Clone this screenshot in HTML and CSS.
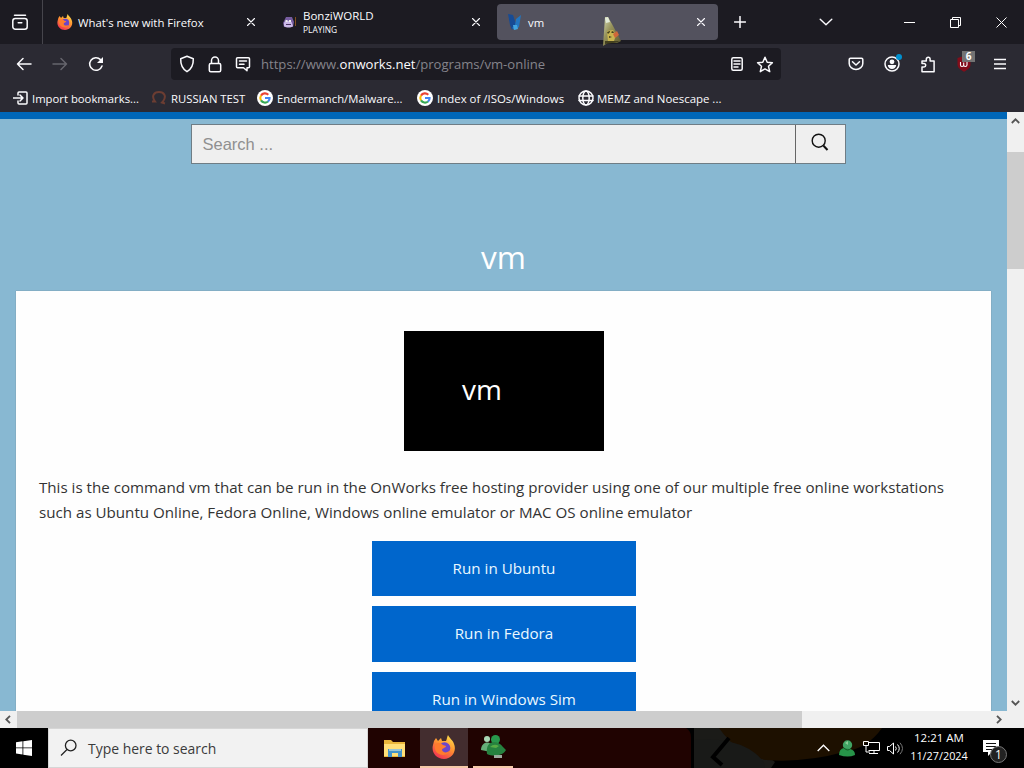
FILE: index.html
```html
<!DOCTYPE html>
<html lang="en">
<head>
<meta charset="utf-8">
<title>vm</title>
<link rel="stylesheet" href="styles.css">
</head>
<body>
<svg class="defs" aria-hidden="true">
  <defs>
    <linearGradient id="flame" x1=".8" y1="0" x2=".25" y2="1"><stop offset="0" stop-color="#ffe34d"/><stop offset=".45" stop-color="#ff9330"/><stop offset="1" stop-color="#f02d55"/></linearGradient>
    <linearGradient id="paper" x1="0" y1="0" x2="1" y2="1"><stop offset="0" stop-color="#d4dbb8"/><stop offset=".4" stop-color="#96925a"/><stop offset="1" stop-color="#5d5830"/></linearGradient>
  </defs>
  <symbol id="firefox" viewBox="0 0 24 24">
    <path fill="url(#flame)" d="M2 6l2-3 2 3 3-3 1 3 4 0C15 4 15 2 16 0c1 3 5 5 6 9 3 7-2 15-10 15C4 24-1 17 1 10z"/>
    <circle cx="12.5" cy="13" r="5.8" fill="#6b45c9"/>
    <path fill="#ff7b2d" d="M3 9c4-2 6-1 8 1l3 1c0 2-4 2-4 4 1 3 5 3 7 1 0 5-12 6-14-2z"/>
  </symbol>
  <symbol id="google" viewBox="0 0 16 16">
    <circle cx="8" cy="8" r="8" fill="#fff"/>
    <g fill="none" stroke-width="2.1">
      <path stroke="#ea4335" d="M4 5.6A4.7 4.7 0 0 1 11.3 4.7"/>
      <path stroke="#fbbc05" d="M4 5.5a4.8 4.8 0 0 0 0 5"/>
      <path stroke="#34a853" d="M4 10.4a4.7 4.7 0 0 0 7 1.1"/>
      <path stroke="#4285f4" d="M8 8h4.6a4.6 4.6 0 0 1-1.6 3.6"/>
    </g>
  </symbol>
  <symbol id="close" viewBox="0 0 8 8"><path d="M.5.5l7 7m0-7l-7 7"/></symbol>
</svg>

<div class="screen">
  <header class="tabs">
    <div class="firefox-view">
      <svg class="line" width="18" height="18" viewBox="0 0 18 18"><rect x="1.8" y="5.5" width="14.4" height="10.7" rx="2.5"/><path d="M3.5 2.3h11M7.2 9.8h3.6"/></svg>
    </div>
    <div class="tab">
      <svg class="fav" width="16" height="16"><use href="#firefox"/></svg>
      <span class="label">What's new with Firefox</span>
      <svg class="line x" width="8" height="8"><use href="#close"/></svg>
    </div>
    <div class="tab">
      <svg class="fav" width="16" height="16" viewBox="0 0 16 16"><path fill="#765da0" d="M2 9l3-6 6 0 2 5-1 5H3z"/><path fill="#cbb9e8" d="M3 9c1-3 7-3 8 0l1 3c-2 2-7 2-9 0z"/><path fill="#eee" d="M4.500 6h2v2h-2zM8 6h2v2H8z"/><path fill="#493264" d="M5 10h5v1H5z"/><path stroke="#82501e" d="M14.5 3v9"/></svg>
      <div class="label stacked"><span>BonziWORLD</span><small>PLAYING</small></div>
      <svg class="line x" width="8" height="8"><use href="#close"/></svg>
    </div>
    <div class="tab active">
      <svg class="fav" width="16" height="18" viewBox="0 0 16 18"><path fill="#174b94" d="M1 1l5 1 3 9-4 6-2-5z"/><path fill="#2375bf" d="M9 6l5-4-2 12-4 3-3-2 3-3z"/><path fill="#43a5df" d="M6 12l4 0 1 4-4 1z"/></svg>
      <span class="label">vm</span>
      <svg class="line x" width="8" height="8"><use href="#close"/></svg>
      <svg class="cursor" width="24" height="32" viewBox="0 0 24 32"><path fill="url(#paper)" d="M5 1l3 0 4 7 9 17-4 2-8-1-6 4z"/><path fill="#c9b550" d="M7 15l6-1 3 5-2 6-6 1z"/><path fill="#d0683a" d="M13 18l4-3 2 4-4 3z"/><path fill="#43401f" d="M7 16l3-1 0 1-2 2zM11 16l2-1 1 2-2 0zM9 20l3 1-3 1zM5 25l13 0 1 1-14 2z"/><path fill="#e1ead8" d="M5 2l3-1 2 5-4 1z"/></svg>
    </div>
    <div class="new-tab"><svg class="line" width="12" height="12" viewBox="0 0 12 12"><path d="M6 .5v11M.5 6h11"/></svg></div>
    <div class="window-buttons">
      <svg class="line" width="14" height="8" viewBox="0 0 14 8"><path d="M1.2 1.2L7 6.8l5.8-5.6"/></svg>
      <svg class="thin" width="11" height="11" viewBox="0 0 11 11"><path d="M0 5.5h11"/></svg>
      <svg class="thin" width="11" height="11" viewBox="0 0 11 11"><path d="M.5 2.5h8v8h-8zM2.5 2.5v-2h8v8h-2"/></svg>
      <svg class="thin" width="11" height="11" viewBox="0 0 11 11"><path d="M.5.5l10 10m0-10l-10 10"/></svg>
    </div>
  </header>

  <nav class="toolbar">
    <div class="history">
      <svg class="line" width="16" height="14" viewBox="0 0 16 14"><path d="M7 1.500L1.500 7 7 12.500M1.500 7H15"/></svg>
      <svg class="line dim" width="16" height="14" viewBox="0 0 16 14"><path d="M9 1.500l5.500 5.500L9 12.500M14.500 7H1"/></svg>
      <svg class="line" width="16" height="16" viewBox="0 0 16 16"><path d="M14 10A6.300 6.300 0 1 1 12.500 3.600"/><path fill="#fbfbfe" stroke="none" d="M15 1v6H9z"/></svg>
    </div>
    <div class="url">
      <svg class="line" width="16" height="18" viewBox="0 0 16 18"><path d="M8 1.300l6.300 2.400c.2 5.500-1.500 10-6.300 13C3.200 13.700 1.500 9.200 1.700 3.700z"/></svg>
      <svg class="line" width="14" height="17" viewBox="0 0 14 17"><rect x="1.300" y="7.500" width="11.400" height="8.300" rx="1.500"/><path d="M3.500 7V4.500a3.500 3.500 0 0 1 7 0V7"/></svg>
      <svg class="line" width="16" height="16" viewBox="0 0 16 16"><path d="M2.500 1.700h11q1 0 1 1v8q0 1-1 1H12v3l-3.500-3h-6q-1 0-1-1v-8q0-1 1-1zM4.500 5h7M4.500 8.200H9"/></svg>
      <span class="address">https://www.<b>onworks.net</b>/programs/vm-online</span>
      <svg class="line" width="12" height="14" viewBox="0 0 12 14"><rect x=".8" y=".8" width="10.400" height="12.400" rx="1.500"/><path d="M3 4h6M3 7h6M3 10h4"/></svg>
      <svg class="line" width="18" height="17" viewBox="0 0 18 17"><path d="M9 1.300l2.200 4.900 5.200.5-3.900 3.600 1.200 5.300L9 12.900l-4.700 2.700 1.200-5.300-3.900-3.600 5.200-.5z"/></svg>
    </div>
    <div class="actions">
      <svg class="line" width="16" height="14" viewBox="0 0 16 14"><path d="M2.500 1.200h11q1.300 0 1.300 1.200v4a6.800 6 0 0 1-13.600 0v-4q0-1.200 1.300-1.200zM4.500 4.700L8 8l3.500-3.300"/></svg>
      <div class="badge-box">
        <svg class="line" width="16" height="16" viewBox="0 0 16 16"><circle cx="8" cy="8" r="7"/><circle cx="8" cy="5.800" r="2.400" fill="#fbfbfe" stroke="none"/><path fill="#fbfbfe" stroke="none" d="M3.800 9h8.400c-.3 5.200-8.100 5.200-8.400 0z"/></svg>
        <i class="dot"></i>
      </div>
      <svg class="line" width="16" height="17" viewBox="0 0 16 17"><path d="M2 15.800V11h2a1.600 1.600 0 0 0 0-3.400H2V5h4.300V3.200a1.900 1.900 0 0 1 3.800 0V5h4v10.800z"/></svg>
      <div class="badge-box">
        <svg width="16" height="16" viewBox="0 0 16 16"><path fill="#820d1a" d="M1.500 2l6.500-2 6.500 2v7c0 3-4 5.500-6.500 6.700C5.500 14.500 1.500 12 1.500 9z"/><path fill="none" stroke="#fff" stroke-width="1.100" d="M4.500 6v3q0 1.500 1.500 1.500T7.700 9V6.500M7.700 9q0 1.500 1.600 1.500T11 9V6"/></svg>
        <b class="count">6</b>
      </div>
      <svg class="line menu" width="12" height="12" viewBox="0 0 12 12"><path d="M0 1.500h12M0 6h12M0 10.500h12"/></svg>
    </div>
  </nav>

  <div class="bookmarks">
    <div class="bm b1"><svg class="line" width="15" height="14" viewBox="0 0 15 14"><path d="M5 4V2q0-1 1-1h7q1 0 1 1v10q0 1-1 1H6q-1 0-1-1v-2M0 7h10M7 4l3 3-3 3"/></svg><span>Import bookmarks...</span></div>
    <div class="bm b2"><svg width="16" height="16" viewBox="0 0 16 16" fill="none" stroke="#6c3d32" stroke-width="2"><path d="M1 11.500h3C0 6 3 2 8 2s8 4 4 9.500l-1 1 3 1"/></svg><span>RUSSIAN TEST</span></div>
    <div class="bm b3"><svg width="16" height="16"><use href="#google"/></svg><span>Endermanch/Malware...</span></div>
    <div class="bm b4"><svg width="16" height="16"><use href="#google"/></svg><span>Index of /ISOs/Windows</span></div>
    <div class="bm b5"><svg class="line" width="16" height="16" viewBox="0 0 16 16"><circle cx="8" cy="8" r="7"/><ellipse cx="8" cy="8" rx="3.200" ry="7"/><path d="M1 6h14M1 10.500h14"/></svg><span>MEMZ and Noescape ...</span></div>
  </div>

  <div class="viewport">
    <main class="page">
      <form class="search"><span class="field">Search ...</span><span class="go"><svg width="18" height="19" viewBox="0 0 18 19" fill="none" stroke="#111" stroke-width="1.400"><circle cx="7.700" cy="7.700" r="6.500"/><path stroke-width="2" d="M12.500 12.700l4 4.300"/></svg></span></form>
      <h1>vm</h1>
      <section class="card">
        <div class="thumb"><span>vm</span></div>
        <p><span>This is the command vm that can be run in the OnWorks free hosting provider using one of our multiple free online workstations</span><br><span>such as Ubuntu Online, Fedora Online, Windows online emulator or MAC OS online emulator</span></p>
        <div class="runs"><a>Run in Ubuntu</a><a>Run in Fedora</a><a>Run in Windows Sim</a></div>
      </section>
    </main>
    <div class="vscroll">
      <svg width="9" height="6" viewBox="0 0 9 6"><path d="M.8 5L4.500 1.300 8.200 5"/></svg>
      <i></i>
      <svg width="9" height="6" viewBox="0 0 9 6"><path d="M.8 1l3.700 3.700L8.200 1"/></svg>
    </div>
  </div>
  <div class="hscroll">
    <svg width="6" height="9" viewBox="0 0 6 9"><path d="M5 .8L1.300 4.500 5 8.200"/></svg>
    <i></i>
    <svg width="6" height="9" viewBox="0 0 6 9"><path d="M1 .8l3.700 3.700L1 8.200"/></svg>
  </div>

  <footer class="taskbar">
    <svg class="wallpaper" width="656" height="40" viewBox="368 0 656 40"><path fill="#000" d="M368 0h656v40H368z"/><path fill="#200301" d="M368 0h318q5 3 5 9v31H368z"/><path fill="#1b1b18" d="M694 0h36l45 34-4 6h-77z"/><path fill="#1d1000" d="M719 0h163q-14 20-38 24-40 11-78 8-28-5-47-32z"/><path fill="#191a18" d="M694 12q35-3 55 9 16 10 16 19h-71z"/><path fill="none" stroke="#000" stroke-width="4" d="M729 10l-16 19 9 8"/></svg>
    <div class="start"><svg width="16" height="16" viewBox="0 0 16 16" fill="#fff"><path d="M0 2.300l6.500-1v6.200H0zM7.300 1.200L16 0v7.500H7.300zM0 8.300h6.500v6.200L0 13.600zM7.300 8.300H16V16l-8.700-1.300z"/></svg></div>
    <div class="find"><svg width="18" height="18" viewBox="0 0 18 18" fill="none" stroke="#222" stroke-width="1.300"><circle cx="10.700" cy="6.500" r="5.300"/><path d="M7 10.500L1 16.500"/></svg><span>Type here to search</span></div>
    <div class="app"><svg width="22" height="19" viewBox="0 0 22 19"><path fill="#e9b63b" d="M0 1h7l2 2h12v15H0z"/><path fill="#ffdf78" d="M0 5h21v12H0z"/><path fill="#4393ca" d="M4 10h14v8h-4v-4H8v4H4z"/><path fill="#9bc6d2" d="M5 10h12v2H5z"/></svg></div>
    <div class="app current"><svg width="24" height="24"><use href="#firefox"/></svg></div>
    <div class="app open"><svg width="25" height="24" viewBox="0 0 25 24"><circle cx="6" cy="4" r="3" fill="#a8d7b4"/><path fill="#65ae78" d="M0 15c0-9 10-10 12-3l-2 5z"/><circle cx="14.500" cy="4.500" r="4.500" fill="#28984c"/><path fill="#26823f" d="M6 19C4 5 16 4 22 12l3 3c-3 6-13 7-19 4z"/><path fill="#57ac45" d="M9 12q4-4 9-1l-3 2z"/><path fill="#9cac9f" d="M13 20h8v3h-8z"/></svg></div>
    <div class="tray">
      <svg class="thin up" width="13" height="8" viewBox="0 0 13 8"><path stroke-width="1.300" d="M.7 7l5.800-5.800L12.300 7"/></svg>
      <svg class="buddy" width="16" height="17" viewBox="0 0 16 17"><circle cx="8.500" cy="5" r="4.700" fill="#40a464"/><path fill="#279449" d="M0 15q0-6 5-7l6 1q5 1 5 6-7 3-16 0z"/><path fill="#8acc95" d="M6 3l3-2v4z"/><path fill="none" stroke="#125826" d="M5 8q4 4 7 0"/></svg>
      <svg class="thin net" width="17" height="14" viewBox="0 0 17 14"><path d="M5.500 1.500h11v8h-11M11 10v3M6 12.500h9M.5.500h5v4h-5zM3 5v6h4"/></svg>
      <svg class="thin sound" width="17" height="13" viewBox="0 0 17 13"><path d="M.5 4.500h2L6.500 1v11l-4-3.500h-2zM8.500 4.500q1.500 2 0 4M10.500 2.500q3.500 4 0 8"/><path stroke="#777" d="M13 .8q5 5.700 0 11.400"/></svg>
      <div class="clock"><span>12:21 AM</span><span class="date">11/27/2024</span></div>
      <div class="notes"><svg width="17" height="17" viewBox="0 0 17 17"><path fill="#fff" d="M0 0h16v12H9l-4 4v-4H0z"/><path stroke="#111" d="M3 3.500h10M3 6.500h10M3 9.500h6"/></svg><b>1</b></div>
    </div>
  </footer>
</div>
</body>
</html>
```
FILE: styles.css
```css
* { box-sizing: border-box; }
body { margin: 0; font-family: "Open Sans", "Noto Sans", sans-serif; overflow: hidden; }
svg { display: block; flex: none; }
.defs { position: absolute; width: 0; height: 0; }
.screen { width: 1024px; height: 768px; display: flex; flex-direction: column; overflow: hidden; }
.line { fill: none; stroke: #fbfbfe; stroke-width: 1.5; stroke-linecap: round; stroke-linejoin: round; }
.thin { fill: none; stroke: #fff; stroke-width: 1; }
.dim { stroke: #66656d; }
span, small { white-space: nowrap; }

.tabs { height: 44px; background: #1c1b22; display: flex; align-items: center; color: #fbfbfe; font-size: 11.35px; }
.firefox-view { width: 43px; height: 44px; border-right: 1px solid #46454c; display: flex; align-items: center; padding-left: 11px; }
.tab { width: 221px; height: 36px; margin-left: 4px; padding: 0 13px 0 10px; display: flex; align-items: center; gap: 5px; border-radius: 4px; }
.tab + .tab { padding-left: 9px; gap: 6px; }
.tab.active { background: #53525e; position: relative; padding-left: 10px; gap: 5px; }
.label { flex: 1; }
.stacked { display: flex; flex-direction: column; line-height: 14px; padding-top: 1px; font-size: 11.5px; }
.stacked small { font-size: 8.400px; line-height: 13px; }
.x { stroke-width: 1.1; }
.cursor { position: absolute; left: 103px; top: 12px; }
.new-tab { width: 44px; display: flex; justify-content: center; }
.window-buttons { flex: 1; display: flex; justify-content: flex-end; align-items: center; gap: 35px; padding-right: 17px; }
.window-buttons .line { margin-right: 36px; stroke-width: 1.4; }

.toolbar { height: 40px; background: #2b2a33; display: flex; align-items: center; }
.history { width: 171px; display: flex; gap: 20px; padding-left: 16px; }
.history .line { margin-top: auto; margin-bottom: auto; }
.url { width: 610px; height: 32px; background: #1c1b22; border-radius: 4px; display: flex; align-items: center; gap: 13px; padding: 0 7px 0 8px; }
.address { flex: 1; margin-left: -3px; font-size: 13.1px; line-height: 19px; padding-top: 1px; color: #85848b; }
.address b { font-weight: 400; color: #fbfbfe; }
.actions { flex: 1; display: flex; align-items: center; justify-content: flex-end; gap: 20px; padding-right: 18px; }
.menu { margin-left: 2px; }
.badge-box { position: relative; }
.dot { position: absolute; width: 6px; height: 6px; border-radius: 50%; background: #0090cf; left: 12px; top: -2px; }
.count { position: absolute; left: 6px; top: -5px; width: 13px; height: 11px; background: #737373; color: #fff; font-size: 10px; line-height: 11px; text-align: center; }

.bookmarks { height: 28px; background: #2b2a33; display: flex; color: #fbfbfe; font-size: 11.3px; padding-left: 13px; }
.bm { display: flex; align-items: center; gap: 4px; height: 28px; }
.b1 { width: 138px; } .b2 { width: 106px; } .b3 { width: 160px; } .b4 { width: 161px; font-size: 11.450px; }
.b5 { font-size: 11.450px; gap: 3px; }

.viewport { height: 599px; display: flex; overflow: hidden; }
.page { width: 1007px; height: 599px; background: #88b8d2; border-top: 7px solid #0067b8; padding: 5px 16px 0; overflow: hidden; }
.search { margin-left: 175px; width: 655px; height: 40px; display: flex; border: 1px solid #6f7d85; background: #efefef; }
.field { flex: 1; padding-left: 10.500px; font: 16.500px/39px "Liberation Sans", Arial, sans-serif; color: #909090; }
.go { width: 50px; border-left: 1px solid #666; display: flex; align-items: center; justify-content: center; padding: 0 2px 3px 0; }
h1 { margin: 70px 0 0; height: 47px; font-size: 31.500px; font-weight: 400; line-height: 46px; text-align: center; color: #fff; }
.card { flex: none; margin-top: 10px; background: #fefefe; height: 430px; padding: 40px 23px 0; display: flex; flex-direction: column; box-shadow: 0 0 1px #6d7f88; }
.thumb { flex: none; width: 200px; height: 120px; margin-left: 365px; background: #000; color: #fff; font-size: 28px; line-height: 116px; padding-left: 58px; }
p { flex: none; margin: 24px 0 0; font-size: 15.150px; line-height: 25px; color: #333; }
.runs { display: flex; flex-direction: column; gap: 10px; margin: 15.600px 0 0 333px; width: 264px; }
.runs a { flex: none; height: 55.500px; background: #0066cc; color: #eaf8ff; font-size: 15.200px; line-height: 55.500px; text-align: center; }
.vscroll, .hscroll { background: #f0f0f0; display: flex; align-items: center; }
.vscroll { width: 17px; flex-direction: column; padding: 6px 0 5px; }
.vscroll i { width: 17px; height: 117px; background: #cdcdcd; margin: 28px 0 auto; }
.vscroll path, .hscroll path { fill: none; stroke: #555; stroke-width: 1.800; }
.hscroll { height: 17px; padding: 0 22px 0 5px; }
.hscroll i { width: 785px; height: 17px; background: #cdcdcd; margin: 0 auto 0 6px; }

.taskbar { height: 40px; background: #000; display: flex; position: relative; }
.taskbar > div { position: relative; }
.wallpaper { position: absolute; left: 368px; top: 0; }
.start { width: 48px; display: flex; align-items: center; justify-content: center; }
.find { width: 320px; background: #f2f2f2; border: 1px solid #d6d6d6; display: flex; align-items: center; gap: 10px; padding-left: 11px; color: #3b3b3b; font-size: 13.950px; }
.app { width: 48px; display: flex; align-items: center; justify-content: center; padding-left: 5px; }
.app.current { margin-left: 4px; background: #432d2f; border-bottom: 2px solid #f5c9a8; padding: 0; }
.app.open { width: 40px; margin-left: 5px; border-bottom: 2px solid #f5c9a8; padding: 0; }
.tray { flex: 1; display: flex; align-items: center; justify-content: flex-end; color: #fff; }
.up { margin-right: 9px; } .buddy { margin-right: 8px; } .net { margin-right: 7px; } .sound { margin-right: 3px; }
.clock { width: 64px; display: flex; flex-direction: column; align-items: center; font-size: 11.500px; line-height: 18px; padding-bottom: 2px; }
.date { font-size: 10.850px; }
.notes { position: relative; margin-left: 12px; width: 41px; }
.notes b { position: absolute; left: 7px; top: 6px; width: 17px; height: 17px; border: 1px solid #777; border-radius: 50%; background: #222; font: 12px/15px "Open Sans", sans-serif; text-align: center; }
```
